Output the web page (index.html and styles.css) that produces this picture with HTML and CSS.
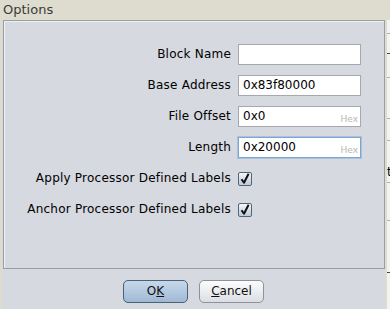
FILE: index.html
```html
<!DOCTYPE html>
<html>
<head>
<meta charset="utf-8">
<link rel="stylesheet" href="styles.css">
</head>
<body>
<div class="screen">
  <div class="dialog">
    <div class="titlebar">Options</div>
    <div class="content">
      <div class="panel">
        <div class="form">
          <label class="lbl">Block Name</label>
          <div class="field"></div>
          <label class="lbl">Base Address</label>
          <div class="field">0x83f80000</div>
          <label class="lbl">File Offset</label>
          <div class="field">0x0<span class="hint">Hex</span></div>
          <label class="lbl">Length</label>
          <div class="field focused">0x20000<span class="hint">Hex</span></div>
          <label class="lbl">Apply Processor Defined Labels</label>
          <div class="chkcell"><span class="chk"><svg width="14" height="14" viewBox="0 0 14 14"><path d="M3.5 7.2 L6 10.8 L10.6 1.8" fill="none" stroke="#111" stroke-width="2" stroke-linejoin="round"/></svg></span></div>
          <label class="lbl">Anchor Processor Defined Labels</label>
          <div class="chkcell"><span class="chk"><svg width="14" height="14" viewBox="0 0 14 14"><path d="M3.5 7.2 L6 10.8 L10.6 1.8" fill="none" stroke="#111" stroke-width="2" stroke-linejoin="round"/></svg></span></div>
        </div>
      </div>
      <div class="buttons">
        <button class="btn primary">O<u>K</u></button>
        <button class="btn"><u>C</u>ancel</button>
      </div>
    </div>
  </div>
  <div class="behind">
    <div class="bh-top"></div>
    <div class="bh-line l1"></div>
    <div class="bh-line dark l2"></div>
    <div class="bh-line l3"></div>
    <div class="bh-line l4"></div>
    <div class="bh-line l5"></div>
    <div class="bh-t">t</div>
    <div class="bh-line l6"></div>
    <div class="bh-line l7"></div>
    <div class="bh-line dark l8"></div>
  </div>
</div>
</body>
</html>
```

FILE: styles.css
```css
* { box-sizing: border-box; }
html, body {
  margin: 0;
  padding: 0;
  width: 390px;
  height: 309px;
  overflow: hidden;
  font-family: "DejaVu Sans", sans-serif;
}
.screen {
  display: flex;
  width: 390px;
  height: 309px;
  background: #dddccf;
}
.dialog {
  width: 387px;
  height: 309px;
  display: flex;
  flex-direction: column;
}
.titlebar {
  height: 20px;
  background: #dddccf;
  color: #3a3a3a;
  font-size: 13px;
  line-height: 18px;
  padding-left: 3px;
  padding-top: 1px;
}
.content {
  flex: 1;
  background: #d6d9df;
  border-left: 2px solid #dddccf;
  border-right: 2px solid #dddccf;
  display: flex;
  flex-direction: column;
}
.panel {
  margin-left: 1px;
  width: 382px;
  height: 249px;
  border: 1px solid #999da4;
  box-shadow: inset 1px 1px 0 #eef0f3;
  background: #d6d9df;
}
.form {
  display: grid;
  grid-template-columns: 1fr 123px;
  grid-auto-rows: 21px;
  column-gap: 7px;
  row-gap: 10px;
  padding: 23px 23px 0 0;
}
.lbl {
  font-size: 12px;
  letter-spacing: 0.22px;
  color: #000;
  text-align: right;
  line-height: 21px;
  white-space: nowrap;
}
.field {
  position: relative;
  background: #fff;
  border: 1px solid #a5a9af;
  font-size: 12px;
  line-height: 19px;
  padding-left: 4px;
  color: #000;
}
.field.focused {
  border-color: #7fa5cf;
  box-shadow: 0 0 0 1px #a9c3df;
}
.hint {
  position: absolute;
  right: 2px;
  bottom: 2px;
  font-size: 9px;
  line-height: 9px;
  color: #b8b8b8;
}
.chkcell {
  display: flex;
  align-items: center;
}
.chk {
  position: relative;
  width: 14px;
  height: 14px;
  border: 1px solid #51647b;
  border-radius: 2px;
  background: linear-gradient(#f6f8fb, #d2dae4 60%, #c1ccd9);
  display: block;
}
.chk svg {
  position: absolute;
  left: -1px;
  top: -1px;
}
.buttons {
  display: flex;
  justify-content: center;
  gap: 11px;
  padding-top: 11px;
}
.btn {
  width: 65px;
  height: 23px;
  border-radius: 5px;
  border: 1px solid #8d9299;
  background: linear-gradient(#fdfdfe, #e8eaed 60%, #dadde2);
  font-family: "DejaVu Sans", sans-serif;
  font-size: 12px;
  color: #111;
  padding: 0;
  margin: 0;
  line-height: 21px;
}
.btn.primary {
  border-color: #4b6176;
  background: linear-gradient(#c6d7ea, #b2c8df 55%, #9fb8d3);
}
.behind {
  flex: 1;
  position: relative;
  background: #f3f3f3;
}
.bh-top {
  height: 20px;
  background: #dddccf;
}
.bh-line {
  position: absolute;
  left: 0;
  right: 0;
  height: 1px;
  background: #b0b0b0;
}
.bh-line.dark { background: #444; }
.l1 { top: 33px; }
.l2 { top: 53px; }
.l3 { top: 77px; }
.l4 { top: 118px; }
.l5 { top: 140px; }
.l6 { top: 182px; }
.l7 { top: 220px; }
.l8 { top: 272px; }
.bh-t {
  position: absolute;
  top: 165px;
  left: 0;
  font-size: 12px;
  color: #000;
}
```
